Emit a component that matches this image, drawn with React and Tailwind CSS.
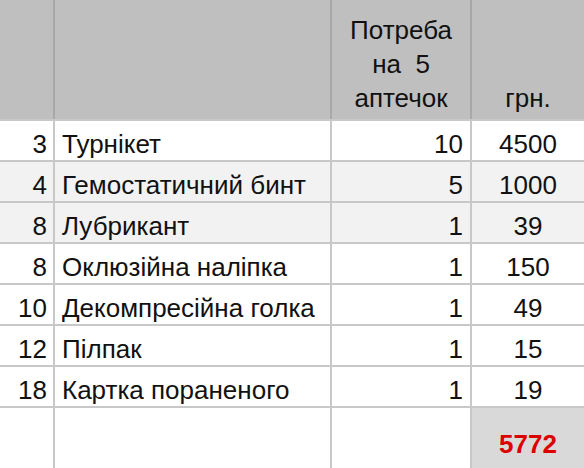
import React from 'react';

const rows = [
  { n: 3, name: 'Турнікет', qty: 10, price: 4500, shade: false },
  { n: 4, name: 'Гемостатичний бинт', qty: 5, price: 1000, shade: true },
  { n: 8, name: 'Лубрикант', qty: 1, price: 39, shade: true },
  { n: 8, name: 'Оклюзійна наліпка', qty: 1, price: 150, shade: false },
  { n: 10, name: 'Декомпресійна голка', qty: 1, price: 49, shade: false },
  { n: 12, name: 'Пілпак', qty: 1, price: 15, shade: false },
  { n: 18, name: 'Картка пораненого', qty: 1, price: 19, shade: false },
];

const cell = 'flex items-end pb-[1px] leading-[30px] h-[39px]';

export default function App() {
  return (
    <div
      className="w-[584px] h-[468px] overflow-hidden bg-[#c8c8c8] text-[26px] text-[#111]"
      style={{ fontFamily: '"Liberation Sans", Arial, sans-serif' }}
    >
      {/* header */}
      <div className="grid grid-cols-[53px_275px_138px_1fr] gap-x-[2px] bg-[#a8a8a8] h-[119px]">
        <div className="bg-[#bfbfbf]" />
        <div className="bg-[#bfbfbf]" />
        <div className="bg-[#bfbfbf] flex flex-col justify-end items-center pb-[4px] leading-[34px] text-center">
          <span>Потреба</span>
          <span className="whitespace-pre">на  5</span>
          <span>аптечок</span>
        </div>
        <div className="bg-[#bfbfbf] flex flex-col justify-end items-center pb-[4px] leading-[34px]">
          <span>грн.</span>
        </div>
      </div>

      {/* body */}
      <div className="grid grid-cols-[53px_275px_138px_1fr] gap-[2px] mt-[2px]">
        {rows.map((r, i) => {
          const bg = r.shade ? 'bg-[#f2f2f2]' : 'bg-white';
          return (
            <React.Fragment key={i}>
              <div className={`${cell} ${bg} justify-end pr-[6px]`}>{r.n}</div>
              <div className={`${cell} ${bg} pl-[7px]`}>{r.name}</div>
              <div className={`${cell} ${bg} justify-end pr-[7px]`}>{r.qty}</div>
              <div className={`${cell} ${bg} justify-center`}>{r.price}</div>
            </React.Fragment>
          );
        })}
        <div className="bg-white h-[61px]" />
        <div className="bg-white h-[61px]" />
        <div className="bg-white h-[61px]" />
        <div className="bg-[#d9d9d9] h-[61px] flex items-end justify-center pb-[10px] leading-[30px] font-bold text-[#dd0000]">
          5772
        </div>
      </div>
    </div>
  );
}
